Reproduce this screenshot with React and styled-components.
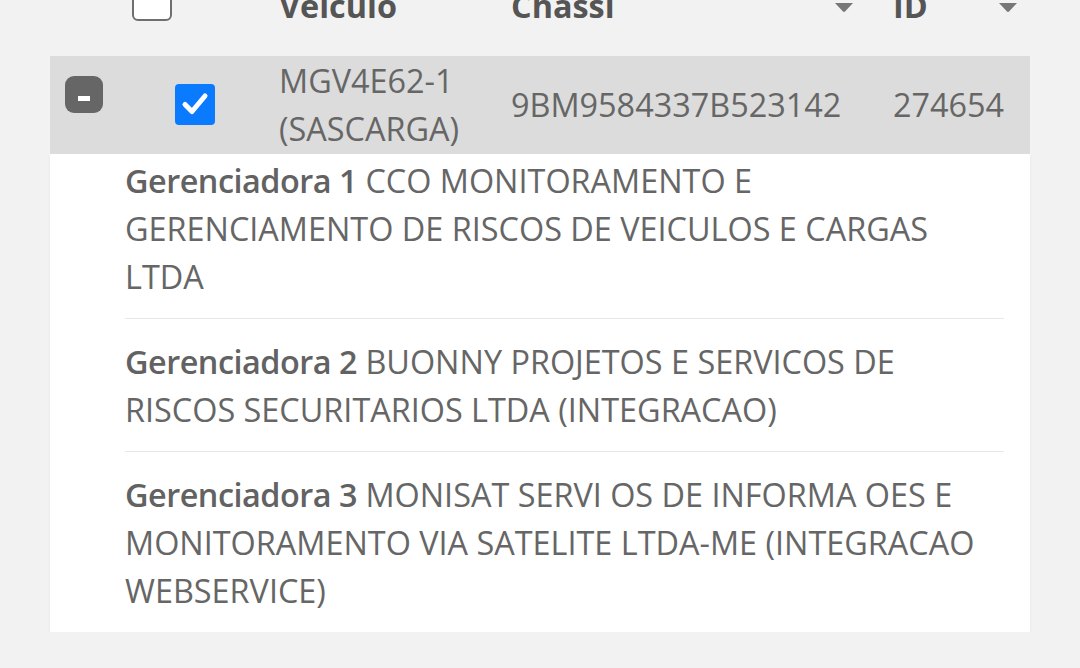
import React from 'react'
import styled, { createGlobalStyle } from 'styled-components'

const GlobalStyle = createGlobalStyle`
  html, body {
    margin: 0;
    padding: 0;
    background: #f2f2f2;
    font-family: "Open Sans", "Noto Sans", sans-serif;
    overflow: hidden;
  }
`

const Page = styled.div`
  padding-left: 50px;
  width: 980px;
`

const Grid = styled.div`
  display: grid;
  grid-template-columns: 75px 154px 232px 382px 137px;
`

const HeaderRow = styled(Grid)`
  margin-top: -23px;
  height: 79px;
  align-items: start;
  color: #555;
  font-size: 32.4px;
  font-weight: 700;
  line-height: 48px;
`

const HeadCell = styled.div`
  display: flex;
  justify-content: space-between;
  padding-top: 4px;
  padding-right: ${p => p.$padRight || 0}px;
  padding-left: ${p => p.$padLeft || 0}px;
`

const SortArrow = styled.svg`
  margin-top: 22px;
  width: 18px;
  height: 9px;
  fill: #777;
`

const BodyRow = styled(Grid)`
  background: #dcdcdc;
  height: 98px;
  box-sizing: border-box;
  padding-bottom: 6px;
  align-items: center;
  color: #666;
  font-size: 32.4px;
  line-height: 48px;
`

const Cell = styled.div`
  padding-left: ${p => p.$padLeft || 0}px;
`

const ToggleCell = styled.div`
  align-self: start;
  padding: 20px 0 0 15px;
`

const ToggleButton = styled.div`
  width: 38px;
  height: 37px;
  border-radius: 9px;
  background: #666;
  display: flex;
  justify-content: center;
  padding-top: 20px;
  box-sizing: border-box;

  span {
    width: 12px;
    height: 5px;
    background: #fff;
  }
`

const Box = styled.div`
  width: 40px;
  height: ${p => (p.$checked ? 41 : 40)}px;
  box-sizing: border-box;
  border-radius: ${p => (p.$checked ? 4 : 6)}px;
  background: ${p => (p.$checked ? '#0a7bff' : '#fff')};
  border: ${p => (p.$checked ? 'none' : '2px solid #6f6f6f')};
  display: flex;
  align-items: center;
  justify-content: center;
`

const Details = styled.div`
  background: #fff;
  padding: 2px 26px 0 75px;
  box-shadow: 0 2px 3px rgba(0, 0, 0, 0.06);
  color: #666;
  font-size: 32.4px;
  line-height: 48px;
`

const Item = styled.div`
  padding: 18px 0;
  border-top: 1px solid #e8e8e8;

  &:first-child {
    padding-top: 0;
    border-top: none;
  }

  b {
    font-weight: 600;
    letter-spacing: -0.5px;
    color: #626262;
  }
`

const Arrow = () => (
  <SortArrow viewBox="0 0 18 9">
    <path d="M0 0 H18 L10 8.5 Q9 9.4 8 8.5 Z" />
  </SortArrow>
)

const Check = () => (
  <svg width="28" height="26" viewBox="0 0 28 26">
    <path d="M4 13.5 L11 20.5 L24 5" fill="none" stroke="#fff" strokeWidth="5" strokeLinecap="round" strokeLinejoin="round" />
  </svg>
)

const gerenciadoras = [
  'CCO MONITORAMENTO E GERENCIAMENTO DE RISCOS DE VEICULOS E CARGAS LTDA',
  'BUONNY PROJETOS E SERVICOS DE RISCOS SECURITARIOS LTDA (INTEGRACAO)',
  'MONISAT SERVI OS DE INFORMA OES E MONITORAMENTO VIA SATELITE LTDA-ME (INTEGRACAO WEBSERVICE)',
]

export default function App() {
  return (
    <>
      <GlobalStyle />
      <Page>
        <HeaderRow>
          <HeadCell />
          <HeadCell $padLeft={7}>
            <Box />
          </HeadCell>
          <HeadCell>Veículo</HeadCell>
          <HeadCell $padRight={40}>
            Chassi
            <Arrow />
          </HeadCell>
          <HeadCell $padRight={13}>
            ID
            <Arrow />
          </HeadCell>
        </HeaderRow>
        <BodyRow>
          <ToggleCell>
            <ToggleButton>
              <span />
            </ToggleButton>
          </ToggleCell>
          <Cell $padLeft={50}>
            <Box $checked>
              <Check />
            </Box>
          </Cell>
          <Cell>MGV4E62-1 (SASCARGA)</Cell>
          <Cell>9BM9584337B523142</Cell>
          <Cell>274654</Cell>
        </BodyRow>
        <Details>
          {gerenciadoras.map((name, i) => (
            <Item key={i}>
              <b>Gerenciadora {i + 1}</b> {name}
            </Item>
          ))}
        </Details>
      </Page>
    </>
  )
}
